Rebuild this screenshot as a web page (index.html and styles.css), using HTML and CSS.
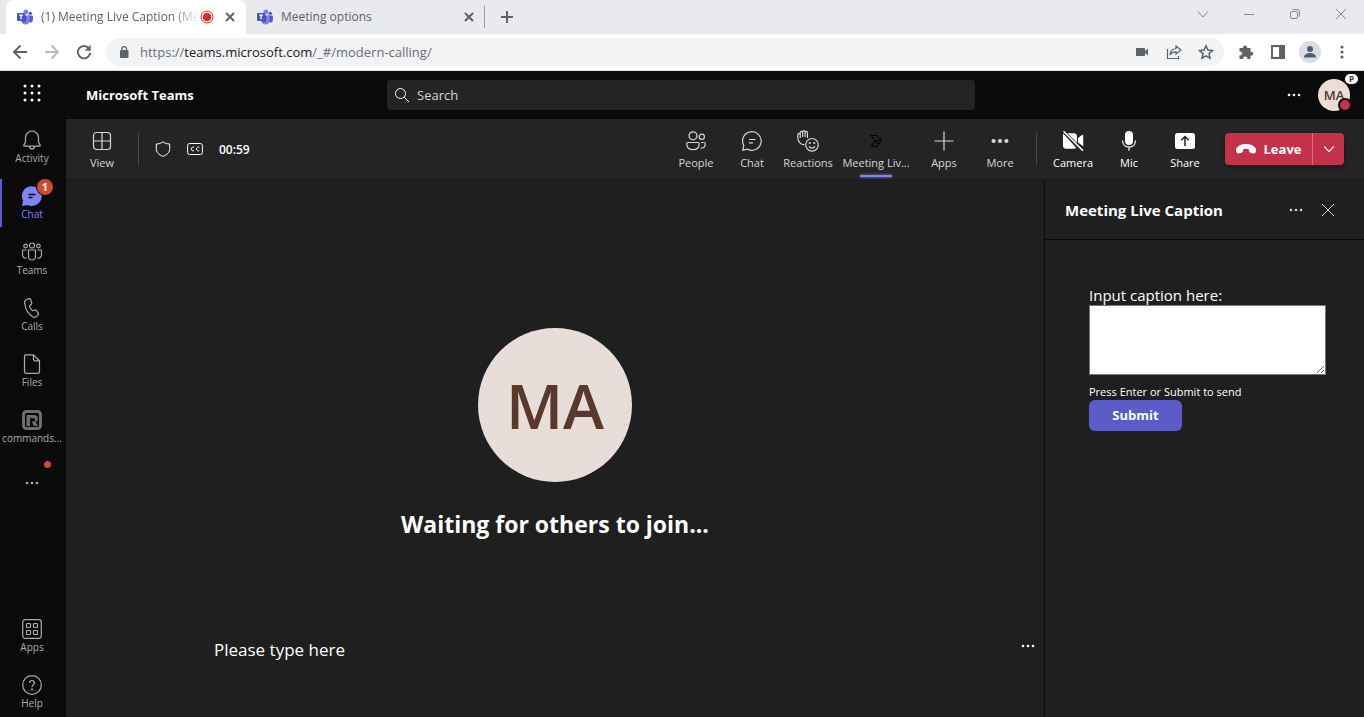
FILE: index.html
```html
<!DOCTYPE html>
<html lang="en">
<head>
<meta charset="utf-8">
<meta name="viewport" content="width=device-width, initial-scale=1">
<title>Meeting Live Caption</title>
<link rel="stylesheet" href="styles.css">
</head>
<body>
<svg class="defs" aria-hidden="true">
  <defs>
    <symbol id="teams" viewBox="0 0 16 16">
      <circle cx="13.2" cy="4.4" r="1.7" fill="#5059c9"/>
      <path d="M10.8 6.6h4.400c.4 0 .7.3.7.7v3.600a2.600 2.600 0 0 1-5.100.7z" fill="#5059c9"/>
      <circle cx="8.9" cy="2.9" r="2.5" fill="#7b83eb"/>
      <path d="M5.2 6.6h6.600c.4 0 .7.3.7.7v4.300a4 4 0 0 1-8 0V7.300c0-.4.3-.7.7-.7z" fill="#7b83eb"/>
      <path d="M4.5 6.6h4.600v5.200c0 .5-.4.9-.9.9H4.700z" fill="#3d45a5"/>
      <rect x="0" y="3.9" width="8" height="8" rx=".8" fill="#4b53bc"/>
      <path d="M2.2 6.2h3.700M4 6.200v4" stroke="#fff" stroke-width="1.300"/>
    </symbol>
    <symbol id="close" viewBox="0 0 16 16"><path d="m4 4 8 8m0-8-8 8"/></symbol>
    <symbol id="dots" viewBox="0 0 20 20"><g fill="currentColor" stroke="none"><circle cx="5" cy="10" r="1.300"/><circle cx="10" cy="10" r="1.300"/><circle cx="15" cy="10" r="1.300"/></g></symbol>
    <symbol id="chat" viewBox="0 0 20 20"><path d="M.8 19.200 1.800 14.600A9.300 9.300 0 1 1 5.500 18.200zM7 8.500h6.500M7 11.800h4"/></symbol>
  </defs>
</svg>

<header class="browser">
  <div class="tabs">
    <div class="tab tab-on">
      <svg class="fav"><use href="#teams"/></svg>
      <span class="tab-title">(1) Meeting Live Caption (Me</span>
      <svg class="rec" viewBox="0 0 14 14"><circle cx="7" cy="7" r="6" fill="none" stroke="#d93025" stroke-width="1"/><circle cx="7" cy="7" r="4.300" fill="#d93025"/></svg>
      <button class="tab-close" aria-label="Close tab"><svg><use href="#close"/></svg></button>
    </div>
    <div class="tab">
      <svg class="fav"><use href="#teams"/></svg>
      <span class="tab-title">Meeting options</span>
      <button class="tab-close" aria-label="Close tab"><svg><use href="#close"/></svg></button>
    </div>
    <button class="new-tab" aria-label="New tab"><svg viewBox="0 0 16 16"><path d="M8 2v12M2 8h12"/></svg></button>
    <div class="window-buttons">
      <button aria-label="Search tabs"><svg viewBox="0 0 14 14"><path d="m2 4.500 5 5.500 5-5.500"/></svg></button>
      <button aria-label="Minimize"><svg viewBox="0 0 14 14"><path d="M2 7.500h10"/></svg></button>
      <button aria-label="Restore"><svg viewBox="0 0 14 14"><rect x="2.500" y="4.500" width="7" height="7" rx="1.500"/><path d="M4.500 2.500H9a2.500 2.500 0 0 1 2.500 2.500v4.500"/></svg></button>
      <button aria-label="Close window"><svg viewBox="0 0 14 14"><path d="m2 2 10 10m0-10L2 12"/></svg></button>
    </div>
  </div>
  <div class="nav-row">
    <button aria-label="Back"><svg viewBox="0 0 16 16"><path d="M15 8H2m6.500-6.500L2 8l6.500 6.500"/></svg></button>
    <button class="faded" aria-label="Forward"><svg viewBox="0 0 16 16"><path d="M1 8h13M7.500 1.500 14 8l-6.500 6.500"/></svg></button>
    <button aria-label="Reload"><svg viewBox="0 0 16 16"><path d="M13.200 4.700A6.200 6.200 0 1 0 14.200 9"/><path d="M14.700.8v6h-6z" fill="currentColor" stroke="none"/></svg></button>
    <div class="address">
      <svg class="lock" viewBox="0 0 12 14"><rect x="2" y="5" width="8.500" height="8" rx="1" fill="currentColor"/><path d="M4 6V3.800a2.250 2.250 0 0 1 4.500 0V6" fill="none" stroke="currentColor" stroke-width="1.300"/></svg>
      <div class="url" role="textbox" aria-label="Address" contenteditable="true" spellcheck="false">https://<b>teams.microsoft.com</b>/_#/modern-calling/</div>
      <button aria-label="Camera in use"><svg viewBox="0 0 16 16"><path d="M2 4h9v3l3-2.500v7l-3-2.500v3H2z" fill="currentColor" stroke="none"/></svg></button>
      <button aria-label="Share page"><svg viewBox="0 0 16 16" class="thin"><path d="M1.500 5v9.500h11V12"/><path d="M10 2l5 4-5 4V7.800C7.500 7.800 5.500 8.500 4 11c.2-3.500 2.500-6.200 6-6.500z"/></svg></button>
      <button aria-label="Bookmark"><svg viewBox="0 0 16 16"><path d="m8 1.800 1.850 4.300 4.650.4-3.500 3.100 1.050 4.600L8 11.800l-4.050 2.400L5 9.600 1.500 6.500l4.650-.4z" stroke-width="1.500"/></svg></button>
    </div>
    <button aria-label="Extensions"><svg viewBox="0 0 16 16"><path d="M1.500 4h3.700a2 2 0 1 1 3.800 0h3.500v3.800a2 2 0 1 1 0 3.700V15H9.200a2 2 0 1 0-3.900 0H1.500v-3.700a2 2 0 1 0 0-3.800z" fill="currentColor" stroke="none"/></svg></button>
    <button aria-label="Side panel"><svg viewBox="0 0 16 16"><path d="M2 2h12v12H2z"/><path d="M10 2h4v12h-4z" fill="currentColor"/></svg></button>
    <button class="profile" aria-label="Profile"><svg viewBox="0 0 16 16"><circle cx="8" cy="5" r="3" fill="currentColor" stroke="none"/><path d="M2 13.500c0-3 3-4.500 6-4.500s6 1.500 6 4.500z" fill="currentColor" stroke="none"/></svg></button>
    <button aria-label="Browser menu"><svg viewBox="0 0 16 16"><g fill="currentColor" stroke="none"><circle cx="8" cy="3" r="1.600"/><circle cx="8" cy="8" r="1.600"/><circle cx="8" cy="13" r="1.600"/></g></svg></button>
  </div>
</header>

<div class="app-bar">
  <div class="app-name">
    <button class="waffle" aria-label="App launcher"><svg viewBox="0 0 20 20"><g fill="currentColor"><circle cx="3" cy="3" r="1.500"/><circle cx="10" cy="3" r="1.500"/><circle cx="17" cy="3" r="1.500"/><circle cx="3" cy="10" r="1.500"/><circle cx="10" cy="10" r="1.500"/><circle cx="17" cy="10" r="1.500"/><circle cx="3" cy="17" r="1.500"/><circle cx="10" cy="17" r="1.500"/><circle cx="17" cy="17" r="1.500"/></g></svg></button>
    <strong>Microsoft Teams</strong>
  </div>
  <label class="search">
    <svg viewBox="0 0 16 16"><circle cx="6.500" cy="6.500" r="5"/><path d="m10.200 10.200 4.800 4.800"/></svg>
    <input type="search" placeholder="Search" aria-label="Search">
  </label>
  <div class="account">
    <button class="icon-button" aria-label="Settings and more"><svg><use href="#dots"/></svg></button>
    <button class="me" aria-label="Account">MA<span class="tenant">P</span><span class="busy"></span></button>
  </div>
</div>

<div class="workspace">
  <nav class="rail">
    <button><svg viewBox="0 0 20 20"><path d="M10 1a6.500 6.500 0 0 0-6.500 6.500v4.300L1.800 15.200c-.2.500.1.900.6.900h15.200c.5 0 .8-.4.6-.9l-1.700-3.400V7.500A6.500 6.500 0 0 0 10 1zM7.400 16.300a2.600 2.600 0 0 0 5.200 0"/></svg><span>Activity</span></button>
    <button class="current"><svg viewBox="0 0 20 20"><path d="M0 20 1 14.600A9.900 9.900 0 1 1 5.500 19z" fill="currentColor" stroke="none"/><path d="M6.500 8.500h7M6.500 11.500h4" stroke="#0a0a0a" stroke-width="1.500"/></svg><span>Chat</span><i class="count">1</i></button>
    <button><svg viewBox="0 0 20 20"><circle cx="10" cy="3.500" r="2.500"/><circle cx="3.600" cy="4" r="1.800"/><circle cx="16.400" cy="4" r="1.800"/><path d="M6.500 8h7v6.500a3.500 3.500 0 0 1-7 0zM4.500 8h-4v5a3.200 3.200 0 0 0 4 3M15.500 8h4v5a3.200 3.200 0 0 1-4 3"/></svg><span>Teams</span></button>
    <button><svg viewBox="0 0 20 20"><path d="m5.300 1.200 1.500-.4c.8-.2 1.600.2 1.900 1l1 2.600c.3.700.1 1.400-.4 1.900L7.500 8c.3 1.800 1.400 3.600 3 4.700l2.300-.7c.7-.2 1.400 0 1.800.6l1.600 2.200c.5.700.4 1.500-.2 2.100l-1.100 1.200c-1 1.200-2.700 1.500-4.100.7C6.500 16.200 3.500 11.300 2.700 5.500c-.3-1.900.8-3.700 2.600-4.300z"/></svg><span>Calls</span></button>
    <button><svg viewBox="0 0 20 20"><path d="M4 .8h7.500l6 6v11c0 .8-.6 1.500-1.500 1.500H4c-.8 0-1.500-.7-1.500-1.500V2.300C2.500 1.400 3.200.8 4 .8zM11.500.8v4.500c0 .9.600 1.500 1.500 1.500h4.500"/></svg><span>Files</span></button>
    <button><svg viewBox="0 0 20 20"><rect x="1.500" y="1.500" width="17" height="17" rx="3" fill="#0a0a0a" stroke="#6e6e6e" stroke-width="3"/><path d="M4.500 5H12a3.700 3.700 0 0 1 1.800 7L16 16h-4L9.500 11.500h2.200a1.600 1.600 0 0 0 0-3.200H8V16H4.500z" fill="#6e6e6e" stroke="none"/></svg><span>commands...</span></button>
    <button class="overflow" aria-label="More apps"><i class="new-dot"></i><svg><use href="#dots"/></svg></button>
    <button class="rail-end"><svg viewBox="0 0 20 20"><rect x=".7" y=".7" width="18.600" height="18.600" rx="2.500"/><rect x="4.500" y="4.500" width="4" height="4" rx=".8"/><rect x="11.500" y="4.500" width="4" height="4" rx=".8"/><rect x="4.500" y="11.500" width="4" height="4" rx=".8"/><rect x="11.500" y="11.500" width="4" height="4" rx=".8"/></svg><span>Apps</span></button>
    <button><svg viewBox="0 0 20 20"><circle cx="10" cy="10" r="9.300"/><path d="M7.500 8c0-1.500 1-2.500 2.500-2.500s2.500 1 2.500 2.300c0 2-2.500 2.200-2.500 4.200"/><circle cx="10" cy="14.600" r=".5"/></svg><span>Help</span></button>
  </nav>

  <main class="call">
    <div class="call-bar">
      <button class="tool"><svg viewBox="0 0 20 20"><rect x="1.500" y="1.500" width="17" height="17" rx="3"/><path d="M10 1.500v17M1.500 10h17"/></svg><span>View</span></button>
      <hr class="rule">
      <div class="status">
        <svg viewBox="0 0 16 16"><path d="M8 .8C10 2.300 12.300 3 14.700 3v4.500c0 3.700-2.300 6.300-6.700 7.800-4.400-1.500-6.700-4.100-6.700-7.800V3C3.700 3 6 2.300 8 .8z"/></svg>
        <svg viewBox="0 0 16 16"><rect x=".6" y="2.500" width="14.800" height="11" rx="2"/><path d="M7 6.300a1.900 1.900 0 1 0 0 3.300M12.300 6.300a1.900 1.900 0 1 0 0 3.300"/></svg>
        <time>00:59</time>
      </div>
      <div class="tools">
        <button class="tool"><svg viewBox="0 0 20 20"><circle cx="7" cy="4.800" r="4"/><circle cx="15.800" cy="5.800" r="2.600"/><path d="M2 11.500h10c.8 0 1.200.5 1.200 1.200 0 4-2.500 6-6.200 6s-6.300-2-6.300-6c0-.7.500-1.200 1.300-1.200zM15 11.500h3.200c.8 0 1.100.4 1.100 1.200 0 3.300-2 4.500-4.700 4.500"/></svg><span>People</span></button>
        <button class="tool"><svg><use href="#chat"/></svg><span>Chat</span></button>
        <button class="tool"><svg class="wide" viewBox="0 0 22 22"><path d="M7.500 14.800C3.500 14.500.8 11.500.8 8V4.500a1.200 1.200 0 0 1 2.400 0V8M3.200 5V2.500a1.200 1.200 0 0 1 2.400 0V7M5.600 2.500V1.800a1.200 1.200 0 0 1 2.400 0V7M8 2.500a1.200 1.200 0 0 1 2.400 0V8"/><circle cx="15" cy="14.800" r="6.300"/><circle cx="12.800" cy="13" r=".5"/><circle cx="17.200" cy="13" r=".5"/><path d="M12 16.300c1.500 2.300 4.500 2.300 6 0"/></svg><span>Reactions</span></button>
        <button class="tool selected"><svg viewBox="0 0 20 20" class="app-glyph"><path d="M5 4.500h6l4 5-4 6H5.500L9 9.500zM9 9.500h6M9 9.500l4 4"/></svg><span>Meeting Liv...</span></button>
        <button class="tool"><svg viewBox="0 0 20 20"><path d="M10 .5v19M.5 10h19"/></svg><span>Apps</span></button>
        <button class="tool"><svg viewBox="0 0 20 20"><g fill="currentColor" stroke="none"><circle cx="3.600" cy="10" r="2.100"/><circle cx="10" cy="10" r="2.100"/><circle cx="16.400" cy="10" r="2.100"/></g></svg><span>More</span></button>
        <hr class="rule">
        <button class="tool bright"><svg class="wide" viewBox="0 0 22 22"><path d="M1.200 3.500 14 17.500c-.5.900-1 1.200-2 1.200H4c-1.700 0-3-1.200-3-3V5.500c0-.8.100-1.500.2-2zM5.500 3.300H12c1.700 0 3 1.200 3 3v6.500zM16 8l4-3c.5-.4 1.200 0 1.200.6v10.600L16 12.500z" fill="currentColor" stroke="none"/><path d="m1.500 1.200 19.500 19.600" stroke-width="1.600"/></svg><span>Camera</span></button>
        <button class="tool bright"><svg viewBox="0 0 20 20"><rect x="6" y="0" width="8" height="14" rx="4" fill="currentColor" stroke="none"/><path d="M3.500 9.500c0 4 2.800 6.500 6.500 6.500s6.500-2.500 6.500-6.500M10 16v3.800"/></svg><span>Mic</span></button>
        <button class="tool bright"><svg viewBox="0 0 20 20"><rect x="0" y="2" width="20" height="16" rx="2.500" fill="currentColor" stroke="none"/><path d="M10 15V6M6.300 9.200 10 5.500l3.700 3.700" stroke="#242424" stroke-width="1.500"/></svg><span>Share</span></button>
        <div class="leave">
          <button><svg viewBox="0 0 20 20"><path d="M.3 11.300C.5 7.500 5 5.500 10 5.500s9.500 2 9.700 5.800c.1 2-.8 2.900-2.300 2.700l-2.500-.5c-1-.2-1.500-.9-1.500-1.900V10C11.500 9.200 8.500 9.200 6.600 10v1.600c0 1-.5 1.700-1.500 1.900L2.600 14C1.100 14.200.2 13.300.3 11.300z" fill="currentColor"/></svg>Leave</button>
          <button class="leave-more" aria-label="Leave options"><svg viewBox="0 0 16 16"><path d="m2.500 5 5.500 6 5.500-6"/></svg></button>
        </div>
      </div>
    </div>

    <div class="call-body">
      <section class="stage">
        <div class="waiting">
          <div class="avatar">MA</div>
          <h1>Waiting for others to join...</h1>
        </div>
        <div class="caption">
          <p>Please type here</p>
          <button class="icon-button" aria-label="Caption options"><svg><use href="#dots"/></svg></button>
        </div>
      </section>
      <aside class="panel">
        <header>
          <h2>Meeting Live Caption</h2>
          <button class="icon-button" aria-label="Panel options"><svg><use href="#dots"/></svg></button>
          <button class="icon-button" aria-label="Close panel"><svg viewBox="0 0 20 20"><path d="m4 4 12 12m0-12L4 16"/></svg></button>
        </header>
        <form>
          <label for="caption">Input caption here:</label>
          <textarea id="caption" aria-describedby="hint"></textarea>
          <small id="hint">Press Enter or Submit to send</small>
          <button type="button">Submit</button>
        </form>
      </aside>
    </div>
  </main>
</div>
</body>
</html>
```
FILE: styles.css
```css
* { box-sizing: border-box; }

body {
  margin: 0;
  height: 100vh;
  display: flex;
  flex-direction: column;
  overflow: hidden;
  background: #0a0a0a;
  color: #fff;
  font-family: "Open Sans", "Noto Sans", sans-serif;
  font-size: 13px;
}

button {
  margin: 0;
  padding: 0;
  border: 0;
  background: none;
  color: inherit;
  font: inherit;
}

svg {
  display: block;
  flex: none;
  fill: none;
  stroke: currentColor;
}

.defs { position: absolute; width: 0; height: 0; }

/* Browser frame */
.browser { flex: none; background: #fff; color: #5f6368; }

.tabs {
  display: flex;
  align-items: stretch;
  height: 34px;
  padding-left: 6px;
  background: #e8eaed;
}

.tab {
  display: flex;
  align-items: center;
  gap: 8px;
  width: 239px;
  padding: 0 7px 0 11px;
  border-right: 1px solid #9a9ca0;
  border-image: linear-gradient(transparent 7px, #9a9ca0 7px 27px, transparent 27px) 1;
}

.tab-on {
  width: 240px;
  padding-right: 8px;
  border: 0;
  border-radius: 8px 8px 0 0;
  background: #fff;
}

.tab svg { stroke: none; }
.tab .fav { width: 16px; height: 16px; }
.tab .rec { width: 14px; height: 14px; }

.tab-title {
  flex: 1;
  white-space: nowrap;
  font-size: 12px;
  line-height: 18px;
}

.tab-on .tab-title {
  min-width: 0;
  margin-right: -8px;
  -webkit-mask-image: linear-gradient(to right, #000 82%, transparent);
  mask-image: linear-gradient(to right, #000 82%, transparent);
}

.tab .tab-close svg { width: 16px; height: 16px; stroke: currentColor; stroke-width: 2; }

.new-tab { width: 44px; display: grid; place-items: center; }
.new-tab svg { width: 16px; height: 16px; stroke-width: 2; }

.window-buttons { display: flex; margin-left: auto; color: #85878b; }
.window-buttons button { width: 46px; padding-bottom: 6px; display: grid; place-items: center; }
.window-buttons svg { width: 14px; height: 14px; stroke-width: 1; }

.nav-row {
  display: flex;
  align-items: center;
  height: 37px;
  padding: 0 6px 0 4px;
  border-bottom: 1px solid #dadce0;
}

.nav-row button { width: 32px; height: 28px; display: grid; place-items: center; }
.nav-row button svg { width: 16px; height: 16px; stroke-width: 1.9; }
.nav-row .faded { color: #babcbe; }
.nav-row button .thin { stroke-width: 1.2; }

.address {
  flex: 1;
  display: flex;
  align-items: center;
  height: 28px;
  margin: 0 6px;
  padding: 0 2px 0 12px;
  border-radius: 14px;
  background: #f1f3f4;
}

.lock { width: 12px; height: 14px; stroke: none; }
.url { flex: 1; margin-left: 10px; white-space: nowrap; color: #6b6f74; line-height: 20px; outline: 0; }
.url b { font-weight: 400; color: #202124; }
.nav-row .profile { width: 22px; height: 22px; margin: 0 5px; border-radius: 50%; background: #dadce4; color: #505b75; }

/* Teams header */
.app-bar {
  flex: none;
  display: grid;
  grid-template-columns: 1fr 588px 1fr;
  align-items: center;
  height: 48px;
  padding-right: 2px;
}

.app-name { display: flex; align-items: center; }
.waffle { display: grid; justify-items: center; width: 66px; margin-right: 20px; padding: 0 2px 4px 0; }
.waffle svg { width: 20px; height: 20px; stroke: none; }

.search {
  display: flex;
  align-items: center;
  gap: 7px;
  height: 30px;
  padding: 0 7px;
  border-radius: 3px;
  background: #242424;
}

.search svg { width: 16px; height: 16px; }
.search input { flex: 1; min-width: 0; padding: 0; border: 0; background: none; outline: 0; color: #fff; font: inherit; }
.search input::placeholder { color: #d6d6d6; opacity: 1; }

.account { display: flex; align-items: center; justify-content: flex-end; gap: 8px; padding-right: 12px; }
.icon-button { width: 32px; height: 32px; display: grid; place-items: center; }
.icon-button svg { width: 20px; height: 20px; }

.me { position: relative; width: 32px; height: 32px; border-radius: 50%; background: #e8ddd9; color: #58392b; font-weight: 600; }
.tenant {
  position: absolute;
  top: -5px;
  right: -8px;
  width: 13px;
  border-radius: 5px;
  background: #fff;
  color: #5a1a5c;
  font-size: 8px;
  font-weight: 700;
  line-height: 10px;
}
.busy { position: absolute; right: -2px; bottom: -1px; width: 14px; height: 14px; border: 2px solid #0a0a0a; border-radius: 50%; background: #c4314b; }

.workspace { flex: 1; min-height: 0; display: flex; }

/* Left rail */
.rail {
  flex: none;
  display: flex;
  flex-direction: column;
  gap: 4px;
  width: 66px;
  padding-bottom: 1px;
  color: #adadad;
}

.rail button {
  position: relative;
  display: flex;
  flex-direction: column;
  align-items: center;
  height: 52px;
  padding: 11px 2px 0 0;
  font-size: 10px;
  line-height: 16px;
}

.rail svg { width: 20px; height: 20px; stroke-width: 1.2; }
.rail .current { color: #7f85f5; }
.rail .current::before { content: ""; position: absolute; left: 0; top: 4px; width: 2px; height: 48px; background: #5b5fc7; }
.rail .rail-end { margin-top: auto; }
.rail .overflow { padding-top: 18px; }

.count {
  position: absolute;
  left: 36px;
  top: 3px;
  width: 18px;
  height: 18px;
  border: 1px solid #0a0a0a;
  border-radius: 50%;
  background: #cc4a31;
  color: #fff;
  font-size: 11px;
  font-style: normal;
  font-weight: 700;
  text-align: center;
}

.new-dot { position: absolute; left: 44px; top: 6px; width: 7px; height: 7px; border-radius: 50%; background: #cc4a31; }

/* Call area */
.call { flex: 1; min-width: 0; display: flex; flex-direction: column; background: #1f1f1f; }

.call-bar {
  flex: none;
  display: flex;
  align-items: center;
  height: 61px;
  padding: 0 20px 0 8px;
  border-bottom: 1px solid #1a1a1a;
  background: #242424;
}

.rule { flex: none; width: 1px; height: 32px; margin: 0 8px; border: 0; background: #4b4b4b; }

.tool {
  position: relative;
  display: flex;
  flex-direction: column;
  align-items: center;
  gap: 3px;
  width: 56px;
  padding-top: 2px;
  color: #d6d6d6;
  font-size: 11px;
  line-height: 16px;
  white-space: nowrap;
}

.tool svg { width: 20px; height: 22px; stroke-width: 1.2; }
.tool .wide { width: 22px; }
.tool.bright { color: #fff; }
.tool.selected { width: 80px; }
.tool.selected::after { content: ""; position: absolute; bottom: -6px; width: 32px; height: 2px; border-radius: 1px; background: #7f85f5; box-shadow: 0 0 3px #7f85f5; }
.tool .app-glyph { color: #050505; }

.status { display: flex; align-items: center; gap: 16px; margin-left: 8px; color: #fff; font-weight: 600; }
.status svg { width: 16px; height: 16px; }
.status time { font-size: 12px; }
.tools { display: flex; align-items: center; margin-left: auto; }

.leave { display: flex; height: 32px; margin-left: 12px; border-radius: 4px; background: #c4314b; box-shadow: 0 2px 4px #0006; }
.leave button { display: flex; align-items: center; justify-content: center; gap: 8px; width: 87px; font-weight: 700; }
.leave svg { width: 20px; height: 20px; }
.leave .leave-more { width: 32px; border-left: 1px solid #e8697c; }
.leave .leave-more svg { width: 14px; height: 14px; stroke-width: 1.4; }

.call-body { flex: 1; min-height: 0; display: flex; }
.stage { flex: 1; min-width: 0; display: flex; flex-direction: column; }

.waiting { flex: 1; display: flex; flex-direction: column; align-items: center; justify-content: center; padding-top: 56px; }
.avatar { display: grid; place-items: center; width: 154px; height: 154px; border-radius: 50%; background: #e8ddd9; color: #58392b; font-size: 62px; font-weight: 600; }
h1 { margin: 27px 0 0; font-size: 23px; line-height: 30px; font-weight: 700; }

.caption { display: flex; align-items: flex-start; justify-content: space-between; height: 87px; padding-left: 148px; }
.caption p { margin: 8px 0 0; font-size: 17px; line-height: 24px; }

.panel { flex: none; width: 320px; border-left: 1px solid #0a0a0a; }
.panel header { display: flex; align-items: center; height: 60px; padding: 1px 20px 0; border-bottom: 1px solid #0a0a0a; color: #d6d6d6; }
.panel h2 { flex: 1; margin: 0; color: #fff; font-size: 15px; line-height: 20px; }
.panel form { display: flex; flex-direction: column; align-items: flex-start; padding: 45px 38px 0 44px; }
.panel label { font-size: 15px; line-height: 20px; }
.panel textarea { width: 100%; height: 70px; margin: 0; border: 1px solid #767676; border-radius: 0; background: #fff; font: inherit; }
.panel small { margin-top: 8px; font-size: 11px; line-height: 17px; }
.panel form button { width: 93px; height: 31px; padding-bottom: 2px; border-radius: 6px; background: #5b5bc9; font-size: 13px; font-weight: 700; }
```
